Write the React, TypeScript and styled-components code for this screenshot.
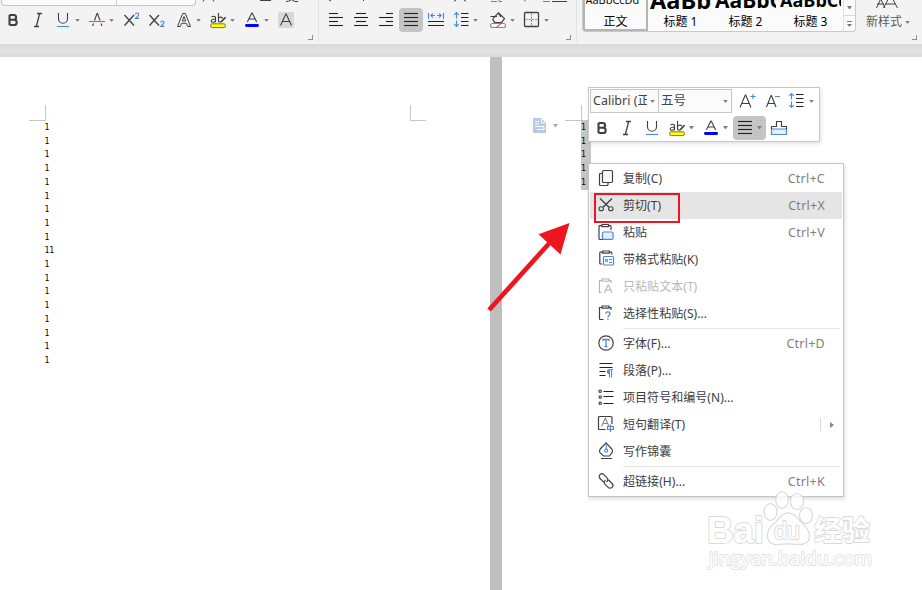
import React from 'react';
import styled, { createGlobalStyle } from 'styled-components';

const ui = `"Noto Sans", "Noto Sans CJK SC", sans-serif`;

const Global = createGlobalStyle`
  * { box-sizing: border-box; }
  body { margin: 0; overflow: hidden; background: #fff; font-family: ${ui}; }
  svg { display: block; flex: none; overflow: visible; }
`;

const Window = styled.div`
  position: relative;
  width: 922px;
  height: 590px;
  overflow: hidden;
  display: flex;
  flex-direction: column;
`;

/* ---------- ribbon ---------- */
const Ribbon = styled.header`
  flex: none;
  height: 44px;
  display: flex;
  background: #f3f3f3;
`;
const Group = styled.section<{ $w: number; $last?: boolean }>`
  position: relative;
  width: ${p => p.$w}px;
  height: 42px;
  flex: none;
  border-right: ${p => (p.$last ? 0 : '1px solid #e2e2e2')};
`;
const Launcher = styled.i<{ $right: number }>`
  position: absolute;
  right: ${p => p.$right}px;
  top: 35px;
  width: 5px;
  height: 5px;
  border: solid #8c8c8c;
  border-width: 0 1px 1px 0;
`;
const UpperRow = styled.div`
  height: 8px;
  overflow: hidden;
  display: flex;
`;
const ComboEdges = styled.div`
  width: 195px;
  height: 6px;
  margin-left: 1px;
  display: flex;
  background: #fbfbfb;
  border: 1px solid #c6c6c6;
  border-top: 0;
  border-radius: 0 0 4px 4px;
`;
const ComboPart = styled.div`
  width: 115px;
  border-right: 1px solid #d0d0d0;
`;
const ToolRow = styled.div<{ $pad: number }>`
  height: 24px;
  display: flex;
  align-items: center;
  padding-left: ${p => p.$pad}px;
`;
const Tool = styled.span<{ $gap?: number; $active?: boolean; $w?: number }>`
  flex: none;
  width: ${p => p.$w ?? 24}px;
  height: 24px;
  margin-left: ${p => p.$gap ?? 1}px;
  border-radius: 4px;
  display: flex;
  align-items: center;
  background: ${p => (p.$active ? '#c4c4c4' : 'transparent')};
`;
const Caret = styled.i<{ $gap?: number; $color?: string }>`
  flex: none;
  margin-left: ${p => p.$gap ?? 0}px;
  width: 5px;
  height: 3px;
  background: ${p => p.$color ?? '#808080'};
  clip-path: polygon(0 0, 100% 0, 60% 100%, 40% 100%);
`;

/* ---------- style gallery ---------- */
const StylesArea = styled.div`
  display: flex;
  padding-left: 5px;
`;
const Gallery = styled.div`
  width: 274px;
  height: 32px;
  display: flex;
  overflow: hidden;
  background: #fbfbfb;
  border: 1px solid #c9c9c9;
  border-top: 0;
  border-radius: 0 0 4px 4px;
`;
const StyleCard = styled.div<{ $on?: boolean }>`
  width: 65px;
  height: 31px;
  flex: none;
  overflow: hidden;
  display: flex;
  flex-direction: column;
  align-items: center;
  border: ${p => (p.$on ? '2px solid #b4b4b4' : '0 solid transparent')};
  border-top: 0;
  color: #000;
`;
const Sample = styled.div<{ $size: number; $bold?: boolean; $w: number; $lift: number }>`
  width: ${p => p.$w}px;
  height: 11px;
  flex: none;
  overflow: hidden;
  white-space: nowrap;
  font-family: "Open Sans", sans-serif;
  font-size: ${p => p.$size}px;
  font-weight: ${p => (p.$bold ? 700 : 400)};
  line-height: 20px;
  & > span { display: block; margin-top: ${p => -p.$lift}px; }
`;
const StyleName = styled.div`
  margin-top: 2px;
  font-size: 12px;
  line-height: 18px;
  white-space: nowrap;
`;
const GalleryScroll = styled.div`
  margin-left: auto;
  width: 12px;
  display: flex;
  flex-direction: column;
  align-items: center;
  border-left: 1px solid #e0e0e0;
`;
const ScrollCell = styled.div<{ $h: number }>`
  width: 11px;
  height: ${p => p.$h}px;
  display: flex;
  align-items: center;
  justify-content: center;
  border-bottom: 1px solid #d6dade;
`;
const NewStyle = styled.div`
  margin-left: 10px;
  display: flex;
  flex-direction: column;
  color: #5b5b5b;
  font-size: 12px;
`;
const NewStyleLabel = styled.div`
  display: flex;
  align-items: center;
  height: 18px;
  margin-top: 4px;
  line-height: 18px;
`;

/* ---------- document ---------- */
const Canvas = styled.main`
  flex: 1;
  display: flex;
  flex-direction: column;
  background: #bfbfbf;
`;
const Shade = styled.div`
  height: 13px;
  flex: none;
  background: linear-gradient(#d9d9d9, #e4e4e4 55%, #dadada);
`;
const Pages = styled.div`
  flex: 1;
  display: flex;
  gap: 12px;
`;
const Page = styled.article<{ $w: number }>`
  width: ${p => p.$w}px;
  flex: none;
  display: flex;
  flex-direction: column;
  padding-top: 48px;
  background: #fff;
`;
const MarginMarks = styled.div<{ $pad: number }>`
  height: 15px;
  display: flex;
  padding-left: ${p => p.$pad}px;
`;
const Mark = styled.i<{ $side: 'l' | 'r'; $gap?: number }>`
  width: ${p => (p.$side === 'r' ? 17 : 16)}px;
  height: 16px;
  margin-left: ${p => p.$gap ?? 0}px;
  border: solid #c6c6c6;
  border-width: ${p => (p.$side === 'r' ? '0 1px 1px 0' : '0 0 1px 1px')};
`;
const Lines = styled.div<{ $indent: number; $selected?: boolean }>`
  margin-left: ${p => p.$indent}px;
  width: ${p => (p.$selected ? '10px' : '20px')};
  padding-top: 1px;
  background: ${p => (p.$selected ? '#c6c6c6' : 'transparent')};
  font: 8px/13.7px "DejaVu Sans Mono", monospace;
  color: #000;
`;
const PasteHint = styled.div`
  position: absolute;
  left: 533px;
  top: 118px;
  display: flex;
  align-items: center;
`;

/* ---------- mini toolbar ---------- */
const MiniBar = styled.div`
  position: absolute;
  left: 588px;
  top: 87px;
  width: 232px;
  height: 55px;
  padding: 1px;
  background: #fff;
  border: 1px solid #c8c8c8;
  box-shadow: 1px 2px 4px rgba(0, 0, 0, 0.12);
`;
const MiniRow = styled.div<{ $h: number }>`
  height: ${p => p.$h}px;
  display: flex;
  align-items: center;
`;
const Combo = styled.div<{ $w: number; $joined?: boolean }>`
  width: ${p => p.$w}px;
  height: 24px;
  display: flex;
  align-items: center;
  justify-content: space-between;
  padding: 0 3px 0 2px;
  border: 1px solid #c6c6c6;
  border-left-width: ${p => (p.$joined ? 0 : 1)}px;
  background: #fbfbfb;
  color: #444;
  font-size: 12.5px;
  line-height: 22px;
`;
const ComboText = styled.span`
  flex: 1;
  overflow: hidden;
  white-space: nowrap;
  margin-right: 3px;
`;

/* ---------- context menu ---------- */
const Menu = styled.div`
  position: absolute;
  left: 588px;
  top: 163px;
  width: 256px;
  height: 334px;
  padding: 1px;
  background: #fff;
  border: 1px solid #c4c4c4;
  box-shadow: 1px 2px 4px rgba(0, 0, 0, 0.14);
`;
const Item = styled.div<{ $hot?: boolean; $off?: boolean }>`
  height: 27px;
  display: flex;
  align-items: center;
  padding: 0 17px 0 7px;
  background: ${p => (p.$hot ? '#e5e5e5' : 'transparent')};
  color: ${p => (p.$off ? '#b8b8b8' : '#3c3c3c')};
  font-size: 12px;
  white-space: nowrap;
`;
const ItemIcon = styled.span`
  padding-bottom: 2px;
`;
const ItemLabel = styled.span`
  margin-left: 8px;
  flex: 1;
  line-height: 18px;
  letter-spacing: 0.05px;
`;
const Shortcut = styled.span`
  color: #808080;
  font-size: 12.5px;
  letter-spacing: 0.25px;
`;
const SubArrow = styled.span`
  height: 13px;
  width: 15px;
  margin-right: -10px;
  padding-left: 9px;
  border-left: 1px solid #d9d9d9;
  display: flex;
  align-items: center;
`;
const Divider = styled.hr`
  height: 1px;
  margin: 1px 2px 1px 33px;
  border: 0;
  background: #e6e6e6;
`;

/* ---------- overlays ---------- */
const RedBox = styled.div`
  position: absolute;
  left: 594px;
  top: 193px;
  width: 86px;
  height: 30px;
  border: 2px solid #ed1520;
`;
const Overlay = styled.svg`
  position: absolute;
  left: 0;
  top: 0;
  pointer-events: none;
`;

const K = '#404040';
const B = '#4d88d6';

type P = { children: React.ReactNode; w?: number; h?: number };
/* strokes sit on half pixels so that single-pixel lines stay crisp */
const Ic = ({ children, w = 24, h = 24 }: P) => (
  <svg width={w} height={h} viewBox={`0 0 ${w} ${h}`} fill="none" stroke={K} strokeWidth="1.1">
    {children}
  </svg>
);

const Bold = () => (
  <Ic>
    <path d="M8.5 7v10M8.5 7h4.2a2.3 2.3 0 0 1 0 4.8H8.5M8.5 11.8h4.6a2.5 2.5 0 0 1 0 5.2H8.5" strokeWidth="2.1" />
  </Ic>
);
const Italic = () => (
  <Ic><path d="M11 5.5h5M8 18.5h5M13.7 5.5l-3.4 13" strokeWidth="1.3" /></Ic>
);
const Underline = () => (
  <Ic>
    <path d="M7.5 5v5.8a4.5 4.5 0 0 0 9 0V5" />
    <path d="M6 18.5h12" stroke={B} />
  </Ic>
);
const StrikeA = () => (
  <Ic>
    <path d="m7.5 18 1-2.500M17 18l-1-2.500M9.500 12.500 12 5.500h.5l2.500 7" />
    <path d="M4 13.5h16" stroke="#d9534f" />
  </Ic>
);
const Sup = ({ sub }: { sub?: boolean }) => (
  <Ic>
    <path d="M4.5 7 14 17.5M14 7 4.5 17.5" strokeWidth="1.3" />
    <path transform={sub ? 'translate(0.3 8)' : undefined} d="M15.5 6.6c0-2.2 3.2-2 3.2-.1 0 1.2-1.5 2-3.2 3.8h3.6" stroke={B} strokeWidth="1.2" />
  </Ic>
);
const OutlineA = () => (
  <Ic>
    <path d="M5.500 18.500 10.700 5.500h2.700l5.100 13h-2.800l-1.300-3.200H9.600l-1.300 3.200zM12 8.500l-1.600 4.500h3.300z" strokeWidth="1" />
  </Ic>
);
const Highlight = () => (
  <Ic>
    <path d="M5.5 9q2.5-1.6 4 .2v5M9.5 11c-2.500 0-4.300.4-4.300 2s2.800 1.900 4.300-.2M12.500 5v9.200M12.500 10.500c1-2 4-1.600 4.300 0M13 13.700l2.300.4" strokeWidth="1.15" />
    <path d="M14.700 14.300l.3-1.500 4-4.100 1.200 1.100-4 4.100z" fill={K} stroke="none" />
    <rect x="4.5" y="15.800" width="15" height="3.800" rx="1.800" fill="#ff0" stroke="#77772d" strokeWidth="1" />
  </Ic>
);
const ColorA = () => (
  <Ic>
    <path d="m7.3 14 4.5-9h.4l4.5 9M8.7 11h6.6" />
    <rect x="5" y="16" width="14" height="3" rx="1.4" fill="#00f" stroke="none" />
  </Ic>
);
const ShadeA = () => (
  <Ic>
    <rect x="4" y="4" width="16" height="16" rx="1.5" fill="#d9d9d9" stroke="none" />
    <path d="M6.5 17.5 11.8 6h.4l5.3 11.5M8.3 13.5h7.4" />
  </Ic>
);
const Bars = ({ rows, y = 5.5, gap = 4 }: { rows: [number, number][]; y?: number; gap?: number }) => (
  <Ic>
    {rows.map(([a, b], i) => (
      <path key={i} d={`M${a} ${y + i * gap}H${b}`} stroke="#222" />
    ))}
  </Ic>
);
const Full = () => <Bars rows={[[5, 19], [5, 19], [5, 19], [5, 19]]} />;
const Spread = () => (
  <Ic>
    <path d="M4.5 5v6M19.5 5v6M7 7.5h4M13 7.5h4M9 5.3 6.8 7.5 9 9.7M15 5.3l2.2 2.2L15 9.7" stroke={B} />
    <path d="M4 13.5h16M4 17.5h16" stroke="#222" />
  </Ic>
);
const Spacing = () => (
  <Ic>
    <path d="M7.5 4.5v6M7.5 12.5v6M5.2 6.8 7.5 4.5l2.3 2.3M5.2 16.2l2.3 2.3 2.3-2.3" stroke={B} />
    <path d="M12 5.5h7.5M12 9.5h7.5M12 13.5h7.5M12 17.5h7.5" stroke="#222" />
  </Ic>
);
const Bucket = () => (
  <Ic>
    <path d="M4.500 8.500h6.500M7 10.500l5.500-5.700 6 5.700-3 4.200H8.800l-2.300-3.500M12.300 4.700l2.500 4.200" strokeWidth="1.200" />
    <rect x="4.500" y="15.500" width="15" height="4" rx="2" fill="#fff" stroke="#888" />
    <path d="m10.500 19.200 4.500-3.600" stroke="#e05050" />
  </Ic>
);
const Borders = () => (
  <Ic>
    <rect x="5.500" y="4.500" width="14" height="14" rx="1" strokeWidth="1.300" />
    <path d="M12.500 5.500v12M6.500 11.500h12" stroke="#888" strokeDasharray="2 1.200" />
  </Ic>
);
const SizeA = ({ plus }: { plus?: boolean }) => (
  <Ic>
    <path d={plus ? 'M5 18.500 10.300 6h.4L16 18.500M6.800 14.500h7.400' : 'M6.500 18 11 6.500h.4L16 18M8.200 14.500h6'} />
    <path d={plus ? 'M15.500 7.500h5M18 5v5' : 'M15 7.500h5'} stroke={B} />
  </Ic>
);
const Brush = () => (
  <Ic>
    <path d="M4.500 13v5.500h15V13z" stroke={B} fill="#e6f0fc" strokeWidth="1.200" />
    <path d="M4.500 13v-2.500h5V5.500h5v5h5V13" strokeWidth="1.200" strokeLinejoin="round" />
  </Ic>
);

/* menu icons, drawn on an 18px grid */
const M = ({ children }: { children: React.ReactNode }) => <Ic w={18} h={18}>{children}</Ic>;
const Clip = () => (
  <path d="M6 16.500H2.800Q2 16.500 2 15.700V3.500q0-.8.8-.8H5M11.500 2.700h1.700q.8 0 .8.8V7M5 1.500h6.500v2.200H5z" strokeWidth="1.200" />
);
const CopyI = () => (
  <M><rect x="5.500" y="1.500" width="10" height="12" rx="1.200" strokeWidth="1.200" /><path d="M5 4.500H3.500q-1 0-1 1v10q0 1 1 1H10q1 0 1-1V14" strokeWidth="1.200" /></M>
);
const CutI = () => (
  <M><path d="M3 2.500 12 11.300M15 2.500 6 11.300" strokeWidth="1.300" /><ellipse cx="4.200" cy="12.800" rx="2.200" ry="2" /><ellipse cx="13.800" cy="12.800" rx="2.200" ry="2" /></M>
);
const PasteI = () => (
  <M><Clip /><rect x="5.500" y="9" width="10.500" height="7.300" rx="1" fill="#e6f0fc" stroke={B} strokeWidth="1.200" /></M>
);
const PasteFmtI = () => (
  <M><g transform="translate(.8 -.5)"><path d="M4.500 14.500H2.800Q2 14.500 2 13.700V3.500q0-.8.8-.8H5M11.500 2.700h1.700q.8 0 .8.8V5M5 1.500h6.500v2.200H5z" strokeWidth="1.200" /></g><rect x="6.500" y="6.500" width="10" height="8.500" rx="1" fill="#fff" stroke={B} strokeWidth="1.200" /><path d="M8.500 9.500h2v2h-2zM12 9.500h3M12 12.500h3" stroke={B} strokeWidth="1" /></M>
);
const PasteTextI = () => (
  <M><g opacity=".4"><path d="M4.500 15.500H2.500v-12h2.500M12 3.500h2V6M5 2h7v2.200H5z" /><path d="m7.500 16 3.500-8h.4L15 16M8.800 13h5" /></g></M>
);
const PasteSpI = () => (
  <M><path d="M6.500 15.500H3.500q-1 0-1-1v-11h2.500M12 3.500h2V6M5 2h7v2.200H5z" strokeWidth="1.200" /><path d="M8.800 9.800c.2-2.600 4.200-2.400 4.200 0 0 1.600-2.100 1.800-2.100 3.600M10.900 14.800v1.500" stroke={B} strokeWidth="1.300" /></M>
);
const FontI = () => (
  <M><circle cx="9" cy="9" r="7.200" strokeWidth="1.200" /><path d="M6 7V5.500h6V7M9 5.500v7M7.500 12.700h3" stroke={B} strokeWidth="1.300" /></M>
);
const ParaI = () => (
  <M><path d="M2.500 2.500h13M2.500 6.500h13M2.500 10.500h6M2.500 14.500h6" stroke="#222" /><path d="M15.800 8.500h-3.300a2 2 0 0 0 0 4v4M14.600 8.500v8" stroke={B} /><circle cx="11.700" cy="10.500" r="1.500" fill={B} stroke="none" /></M>
);
const ListI = () => (
  <M><path d="M6.500 3.500h10M6.500 8.500h10M6.500 15.500h10" stroke="#222" /><circle cx="3.200" cy="3.300" r="1.200" /><circle cx="3.200" cy="8.900" r="1.200" /><circle cx="3.200" cy="15.300" r="1.200" /></M>
);
const TransI = () => (
  <M><path d="M8.500 14.500h-6q-1 0-1-1v-11q0-1 1-1H14q1 0 1 1V9" strokeWidth="1.200" /><path d="m4.500 11.500 3.800-8.500L12 11.500M5.800 8.500h5" stroke="#888" /><path d="M10.500 11.500h6v3h-6zM13.500 9.500v7.500" stroke={B} strokeWidth="1.200" /></M>
);
const PenI = () => (
  <M><path d="M9 .8 14.800 7q1.500 2 .2 3.700L12.500 14h-6L3 10.700Q1.800 9 3.200 7zM4 16.500h11" strokeWidth="1.200" /><path d="M9.200 1.500v5.500" stroke={B} /><circle cx="9.200" cy="8.700" r="1.600" stroke={B} /></M>
);
const LinkI = () => (
  <M><g transform="rotate(45 9 9)" strokeWidth="1.200"><path d="M8.500 11.500H3a2.700 2.700 0 0 1 0-5.500h4.500a2.700 2.700 0 0 1 2.500 3.500" /><path d="M9.800 6.500H15a2.700 2.700 0 0 1 0 5.500h-4.500a2.700 2.700 0 0 1-2.500-3.500" /></g></M>
);

type Entry = { icon?: React.ReactNode; text?: string; keys?: string; hot?: boolean; off?: boolean; sub?: boolean; rule?: boolean };
const entries: Entry[] = [
  { icon: <CopyI />, text: '复制(C)', keys: 'Ctrl+C' },
  { icon: <CutI />, text: '剪切(T)', keys: 'Ctrl+X', hot: true },
  { icon: <PasteI />, text: '粘贴', keys: 'Ctrl+V' },
  { icon: <PasteFmtI />, text: '带格式粘贴(K)' },
  { icon: <PasteTextI />, text: '只粘贴文本(T)', off: true },
  { icon: <PasteSpI />, text: '选择性粘贴(S)...' },
  { rule: true },
  { icon: <FontI />, text: '字体(F)...', keys: 'Ctrl+D' },
  { icon: <ParaI />, text: '段落(P)...' },
  { icon: <ListI />, text: '项目符号和编号(N)...' },
  { icon: <TransI />, text: '短句翻译(T)', sub: true },
  { icon: <PenI />, text: '写作锦囊' },
  { rule: true },
  { icon: <LinkI />, text: '超链接(H)...', keys: 'Ctrl+K' },
];

const leftLines = ['1', '1', '1', '1', '1', '1', '1', '1', '1', '11', '1', '1', '1', '1', '1', '1', '1', '1'];

export default function App() {
  return (
    <Window>
      <Global />
      <Ribbon>
        <Group $w={319}>
          <UpperRow>
            <ComboEdges><ComboPart /></ComboEdges>
            <svg width="110" height="8" fill="none" stroke={K}>
              <path d="M8 0 7 1.500M17 0l1 1.500M64 .5h11M90 1.500q3 0 5-1.500M96 0l3 1.500h3" />
            </svg>
          </UpperRow>
          <ToolRow $pad={0}>
            <Tool><Bold /></Tool>
            <Tool><Italic /></Tool>
            <Tool><Underline /></Tool><Caret />
            <Tool $gap={5}><StrikeA /></Tool><Caret />
            <Tool $gap={6}><Sup /></Tool>
            <Tool><Sup sub /></Tool>
            <Tool $gap={3}><OutlineA /></Tool><Caret />
            <Tool $gap={5}><Highlight /></Tool><Caret />
            <Tool $gap={5}><ColorA /></Tool><Caret />
            <Tool $gap={5}><ShadeA /></Tool>
          </ToolRow>
          <Launcher $right={5} />
        </Group>
        <Group $w={258}>
          <UpperRow>
            <svg width="240" height="8" fill="none" stroke={K}>
              <path d="M10 0l2 1M44 0l1 1M135 1.500l2-1.500M145 0l2 1.500M233 1.500h15" />
              <path d="M172 1.500h6M180 0v1.500h3M205 0l2 1.500M224 1.500h7" stroke={B} />
            </svg>
          </UpperRow>
          <ToolRow $pad={4}>
            <Tool><Bars rows={[[5, 14], [5, 19], [5, 14], [5, 19]]} /></Tool>
            <Tool><Bars rows={[[7, 17], [5, 19], [7, 17], [5, 19]]} /></Tool>
            <Tool><Bars rows={[[12, 19], [5, 19], [12, 19], [5, 19]]} /></Tool>
            <Tool $active><Full /></Tool>
            <Tool><Spread /></Tool>
            <Tool><Spacing /></Tool><Caret />
            <Tool $gap={8}><Bucket /></Tool><Caret />
            <Tool $gap={4}><Borders /></Tool><Caret $gap={1} />
          </ToolRow>
          <Launcher $right={5} />
        </Group>
        <Group $w={345} $last>
          <StylesArea>
            <Gallery>
              <StyleCard $on>
                <Sample $size={11} $w={60} $lift={10}><span>AaBbCcDd</span></Sample>
                <StyleName>正文</StyleName>
              </StyleCard>
              <StyleCard>
                <Sample $size={23.500} $bold $w={61} $lift={10}><span>AaBb</span></Sample>
                <StyleName>标题 1</StyleName>
              </StyleCard>
              <StyleCard>
                <Sample $size={21} $bold $w={61} $lift={10}><span>AaBbC</span></Sample>
                <StyleName>标题 2</StyleName>
              </StyleCard>
              <StyleCard>
                <Sample $size={18} $bold $w={61} $lift={10}><span>AaBbCc</span></Sample>
                <StyleName>标题 3</StyleName>
              </StyleCard>
              <GalleryScroll>
                <ScrollCell $h={16}><Caret /></ScrollCell>
                <svg width="7" height="15" stroke="#777" fill="none"><path d="M1 5.500h5" /><path d="M1 8h5l-2.500 3z" fill="#777" stroke="none" /></svg>
              </GalleryScroll>
            </Gallery>
            <NewStyle>
              <svg width="36" height="9" fill="none" stroke={K}><path d="M10.500 8.500 14.500 0M11 4.500h7M15 0l4 8.500M17.500 8.500 22 0M19.500 4.500h10M27 0l4.500 8.500" transform="translate(0 -.5)" /></svg>
              <NewStyleLabel>新样式<Caret $gap={3} /></NewStyleLabel>
            </NewStyle>
          </StylesArea>
          <Launcher $right={5} />
        </Group>
      </Ribbon>

      <Canvas>
        <Shade />
        <Pages>
          <Page $w={490}>
            <MarginMarks $pad={29}><Mark $side="r" /><Mark $side="l" $gap={364} /></MarginMarks>
            <Lines $indent={44.500}>{leftLines.map((t, i) => <div key={i}>{t}</div>)}</Lines>
          </Page>
          <Page $w={420}>
            <MarginMarks $pad={64}><Mark $side="r" $gap={-1} /></MarginMarks>
            <Lines $indent={79} $selected>{leftLines.slice(0, 5).map((t, i) => <div key={i}>{t}</div>)}</Lines>
          </Page>
        </Pages>
      </Canvas>

      <PasteHint>
        <svg width="13" height="15"><path d="M0 0h8l5 5v10H0z" fill="#b6c9e6" /><path d="M2 3.500h4M2 6h4M2 8.500h9M4 11.500h7v-3M8.500 1v4H12" stroke="#fff" fill="none" /></svg>
        <Caret $gap={7} $color="#aaa" />
      </PasteHint>

      <MiniBar>
        <MiniRow $h={24}>
          <Combo $w={69}><ComboText>Calibri (正</ComboText><Caret /></Combo>
          <Combo $w={73} $joined><ComboText>五号</ComboText><Caret /></Combo>
          <Tool $gap={3}><SizeA plus /></Tool>
          <Tool><SizeA /></Tool>
          <Tool $gap={0}><Spacing /></Tool><Caret $gap={1} />
        </MiniRow>
        <MiniRow $h={29}>
          <Tool $gap={0}><Bold /></Tool>
          <Tool><Italic /></Tool>
          <Tool><Underline /></Tool>
          <Tool><Highlight /></Tool><Caret />
          <Tool $gap={5}><ColorA /></Tool><Caret />
          <Tool $gap={5} $active $w={33}><Full /><Caret /></Tool>
          <Tool $gap={1}><Brush /></Tool>
        </MiniRow>
      </MiniBar>

      <Menu>
        {entries.map((e, i) =>
          e.rule ? <Divider key={i} /> : (
            <Item key={i} $hot={e.hot} $off={e.off}>
              <ItemIcon>{e.icon}</ItemIcon>
              <ItemLabel>{e.text}</ItemLabel>
              {e.keys && <Shortcut>{e.keys}</Shortcut>}
              {e.sub && <SubArrow><svg width="4" height="6"><path d="M0 0l4 3-4 3z" fill="#888" /></svg></SubArrow>}
            </Item>
          ),
        )}
      </Menu>

      <RedBox />
      <Overlay width="922" height="590" viewBox="0 0 922 590">
        <path d="M489 310 549 243.500" stroke="#ed1520" strokeWidth="4.600" />
        <path d="M569.500 223 538.500 234.300 560.500 254.500z" fill="#ed1520" />
        <g fill="#fff" fillOpacity=".8" stroke="#dadada" strokeWidth="1.200">
          <ellipse cx="770.500" cy="512" rx="6.500" ry="8.300" />
          <ellipse cx="782" cy="500" rx="6.300" ry="8.300" />
          <ellipse cx="797" cy="501.500" rx="6.500" ry="8" />
          <ellipse cx="806" cy="515.500" rx="6.500" ry="8" />
          <path d="M788 512.800c7 0 10 6 13 9s8.500 7 8.500 14.500-6 8.500-12 8-12-1-18 0-12-1-12-9 5-10 8-13 5.500-9.500 12.500-9.500z" />
        </g>
        <g fill="#fff" stroke="#dadada" strokeWidth="1.800" paintOrder="stroke" fontWeight="700" strokeLinejoin="round">
          <text x="707" y="543" fontFamily="Liberation Sans, sans-serif" fontSize="37" textLength="57" lengthAdjust="spacingAndGlyphs">Bai</text>
          <text x="774" y="539" fontFamily="Liberation Sans, sans-serif" fontSize="23" fontWeight="400" textLength="26" lengthAdjust="spacingAndGlyphs">du</text>
          <text x="814" y="540.500" fontFamily="Noto Sans CJK SC, sans-serif" fontSize="28" textLength="56" lengthAdjust="spacingAndGlyphs">经验</text>
          <text x="709" y="564.500" fontFamily="Open Sans, sans-serif" fontSize="19" fontWeight="400" stroke="#e2e2e2" textLength="163" lengthAdjust="spacingAndGlyphs">jingyan.baidu.com</text>
        </g>
      </Overlay>
    </Window>
  );
}
